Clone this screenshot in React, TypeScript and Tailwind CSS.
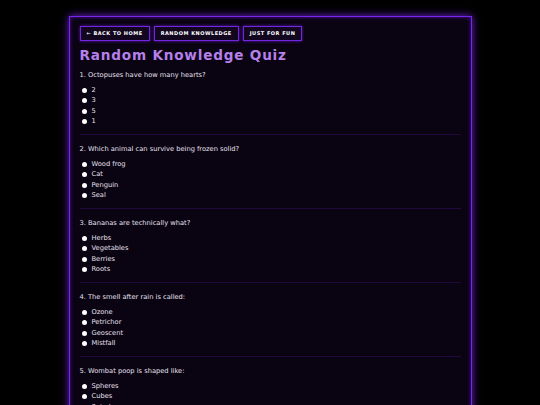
import React from "react";

const questions = [
  { q: "1. Octopuses have how many hearts?", options: ["2", "3", "5", "1"] },
  { q: "2. Which animal can survive being frozen solid?", options: ["Wood frog", "Cat", "Penguin", "Seal"] },
  { q: "3. Bananas are technically what?", options: ["Herbs", "Vegetables", "Berries", "Roots"] },
  { q: "4. The smell after rain is called:", options: ["Ozone", "Petrichor", "Geoscent", "Mistfall"] },
  { q: "5. Wombat poop is shaped like:", options: ["Spheres", "Cubes", "Spirals", "Stars"] },
];

const navLinks = ["← Back to Home", "Random Knowledge", "Just for Fun"];

export default function App() {
  return (
    <div className="min-h-[405px] bg-black pt-[16px] pb-[20px]" style={{ fontFamily: '"DejaVu Sans", Verdana, sans-serif' }}>
      <div className="mx-auto w-[403px] border-[1.5px] border-[#7b24ee] bg-[#0a0312] px-[10px] pt-[8.5px] pb-[10px] shadow-[0_0_8px_#6d1fd6,inset_0_0_4px_#4a1499]">
        <nav className="flex gap-[4px]">
          {navLinks.map((label) => (
            <a
              key={label}
              href="#"
              className="flex h-[15.5px] items-center border-[1.5px] border-[#7226e0] bg-[#13071f] px-[6px] text-[5px] font-bold uppercase tracking-[0.5px] text-white shadow-[0_0_3px_#5b18b8]"
            >
              {label}
            </a>
          ))}
        </nav>

        <h1 className="mt-[4px] h-[20px] text-[13.6px] leading-[20px] font-bold tracking-[0.8px] text-[#b580ea]">
          Random Knowledge Quiz
        </h1>

        <div className="mt-[5px]">
          {questions.map((item, i) => (
            <div
              key={i}
              className={`pb-[7.5px] ${i < questions.length - 1 ? "mb-[8.75px] border-b border-[#22093d]" : ""}`}
            >
              <p className="text-[6.7px] leading-[10px] text-[#e6e0ee]">{item.q}</p>
              <ul className="mt-[4.75px]">
                {item.options.map((opt) => (
                  <li key={opt} className="flex h-[10.5px] items-center gap-[5px] pl-[2px] text-[6.7px] text-[#e6e0ee]">
                    <span className="h-[5px] w-[5px] rounded-full bg-white" />
                    {opt}
                  </li>
                ))}
              </ul>
            </div>
          ))}
        </div>
      </div>
    </div>
  );
}
